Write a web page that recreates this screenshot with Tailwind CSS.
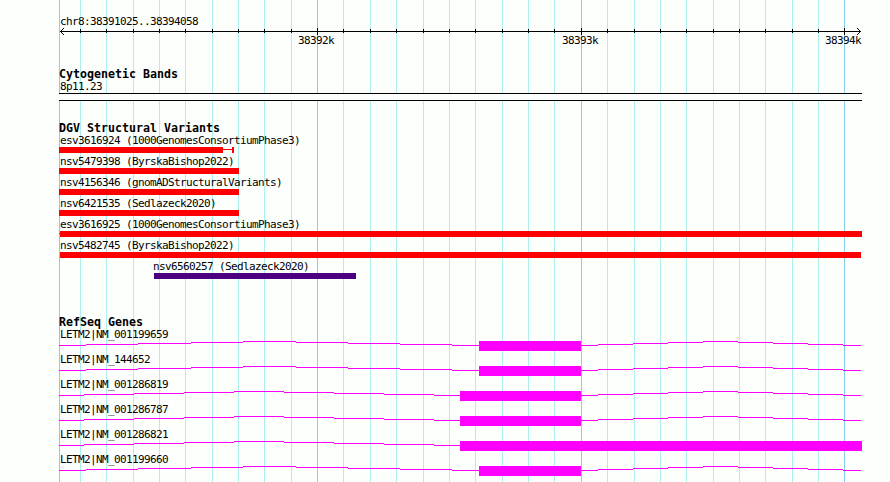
<!DOCTYPE html>
<html lang="en">
<head>
  <meta charset="UTF-8">
  <meta name="viewport" content="width=device-width, initial-scale=1.0">
  <title>chr8:38391025..38394058</title>
  <script src="https://cdn.jsdelivr.net/npm/@tailwindcss/browser@4"></script>
</head>
<body class="bg-[#fdfffc] text-black overflow-hidden">
  <div class="relative w-[890px] h-[482px] overflow-hidden font-['DejaVu_Sans_Mono',monospace] text-[11px] tracking-[-0.622px]">

    <!-- Grid lines -->
    <svg class="absolute inset-0" width="890" height="482" fill="none" shape-rendering="crispEdges">
      <path stroke="#afeeee" d="M80.5 0V482M106.5 0V482M133.5 0V482M159.5 0V482M185.5 0V482M212.5 0V482M238.5 0V482M264.5 0V482M291.5 0V482M343.5 0V482M370.5 0V482M396.5 0V482M423.5 0V482M449.5 0V482M475.5 0V482M502.5 0V482M528.5 0V482M554.5 0V482M607.5 0V482M634.5 0V482M660.5 0V482M686.5 0V482M713.5 0V482M739.5 0V482M765.5 0V482M792.5 0V482M818.5 0V482" />
      <path stroke="#87ceeb" d="M59.5 0V482M317.5 0V482M581.5 0V482M844.5 0V482" />
    </svg>

    <main class="relative flex flex-col pl-[59px]">
      <!-- Ruler -->
      <section class="h-[66px] pt-[13px]">
        <p class="h-[15px] leading-[17px] pl-px whitespace-pre">chr8:38391025..38394058</p>
        <svg class="block" width="831" height="22" viewBox="59 28 831 22">
          <g fill="none" stroke="#000" shape-rendering="crispEdges">
            <path d="M60 31.5H861" />
            <path d="M61 30.5h1M61 32.5h1M62 29.5h1M62 33.5h1M63 28.5h1M63 34.5h1" />
            <path d="M859 30.5h1M859 32.5h1M858 29.5h1M858 33.5h1M857 28.5h1M857 34.5h1" />
            <path d="M80.5 29v4M106.5 29v4M133.5 29v4M159.5 29v4M185.5 29v4M212.5 29v4M238.5 29v4M264.5 29v4M291.5 29v4M343.5 29v4M370.5 29v4M396.5 29v4M423.5 29v4M449.5 29v4M475.5 29v4M502.5 29v4M528.5 29v4M554.5 29v4M607.5 29v4M634.5 29v4M660.5 29v4M686.5 29v4M713.5 29v4M739.5 29v4M765.5 29v4M792.5 29v4M818.5 29v4" />
            <path d="M317.5 28v7M581.5 28v7M844.5 28v7" />
          </g>
          <text x="298" y="44">38392k</text>
          <text x="562" y="44">38393k</text>
          <text x="825" y="44">38394k</text>
        </svg>
      </section>

      <!-- Cytogenetic bands -->
      <section class="h-[54px]">
        <h2 class="h-3 leading-[17px] font-bold text-[11.63px] tracking-normal whitespace-pre">Cytogenetic Bands</h2>
        <p class="h-[15px] leading-[17px] pl-px">8p11.23</p>
        <div class="w-[803px] h-2 border-y border-black bg-[#fdfffc]"></div>
      </section>

      <!-- Structural variants -->
      <section class="h-[194px]">
        <h2 class="h-3 leading-[17px] font-bold text-[11.63px] tracking-normal whitespace-pre">DGV Structural Variants</h2>
        <p class="h-[15px] leading-[17px] pl-px whitespace-pre">esv3616924 (1000GenomesConsortiumPhase3)</p>
        <div class="flex h-1.5">
          <div class="w-[164px] bg-[#ff0000]"></div>
          <div class="w-[9px] h-px mt-0.5 bg-[#ff0000]"></div>
          <div class="w-0.5 bg-[#ff0000]"></div>
        </div>
        <p class="h-[15px] leading-[17px] pl-px whitespace-pre">nsv5479398 (ByrskaBishop2022)</p>
        <div class="w-[180px] h-1.5 bg-[#ff0000]"></div>
        <p class="h-[15px] leading-[17px] pl-px whitespace-pre">nsv4156346 (gnomADStructuralVariants)</p>
        <div class="w-[180px] h-1.5 bg-[#ff0000]"></div>
        <p class="h-[15px] leading-[17px] pl-px whitespace-pre">nsv6421535 (Sedlazeck2020)</p>
        <div class="w-[180px] h-1.5 bg-[#ff0000]"></div>
        <p class="h-[15px] leading-[17px] pl-px whitespace-pre">esv3616925 (1000GenomesConsortiumPhase3)</p>
        <div class="flex h-1.5">
          <div class="w-px h-px mt-0.5 bg-[#ff0000]"></div>
          <div class="w-[802px] bg-[#ff0000]"></div>
        </div>
        <p class="h-[15px] leading-[17px] pl-px whitespace-pre">nsv5482745 (ByrskaBishop2022)</p>
        <div class="w-[801px] h-1.5 ml-px bg-[#ff0000]"></div>
        <p class="h-[15px] leading-[17px] pl-[94px] whitespace-pre">nsv6560257 (Sedlazeck2020)</p>
        <div class="w-[202px] h-1.5 ml-[95px] bg-[#4b0082]"></div>
      </section>

      <!-- Genes: introns are stepped 1px lines, exons are filled boxes -->
      <section>
        <svg class="hidden">
          <defs>
            <path id="intron-a" d="M59 4.5H86M86 3.5H138M138 2.5H191M191 1.5H243M243 .5H296M296 1.5H348M348 2.5H400M400 3.5H452M452 4.5H479" />
            <path id="intron-b" d="M59 4.5H84M84 3.5H134M134 2.5H184M184 1.5H234M234 .5H284M284 1.5H334M334 2.5H384M384 3.5H434M434 4.5H460" />
            <path id="intron-c" d="M581 4.5H598M598 3.5H633M633 2.5H668M668 1.5H703M703 .5H738M738 1.5H773M773 2.5H808M808 3.5H843M843 4.5H861" />
          </defs>
        </svg>
        <h2 class="h-3 leading-[17px] font-bold text-[11.63px] tracking-normal whitespace-pre">RefSeq Genes</h2>
        <p class="h-[15px] leading-[17px] pl-px">LETM2|NM_001199659</p>
        <svg class="block" width="831" height="10" viewBox="59 0 831 10" stroke="#ff00ff" shape-rendering="crispEdges">
          <use href="#intron-a" /><use href="#intron-c" /><rect x="479" width="102" height="10" fill="#ff00ff" stroke="none" />
        </svg>
        <p class="h-[15px] leading-[17px] pl-px">LETM2|NM_144652</p>
        <svg class="block" width="831" height="10" viewBox="59 0 831 10" stroke="#ff00ff" shape-rendering="crispEdges">
          <use href="#intron-a" /><use href="#intron-c" /><rect x="479" width="102" height="10" fill="#ff00ff" stroke="none" />
        </svg>
        <p class="h-[15px] leading-[17px] pl-px">LETM2|NM_001286819</p>
        <svg class="block" width="831" height="10" viewBox="59 0 831 10" stroke="#ff00ff" shape-rendering="crispEdges">
          <use href="#intron-b" /><use href="#intron-c" /><rect x="460" width="121" height="10" fill="#ff00ff" stroke="none" />
        </svg>
        <p class="h-[15px] leading-[17px] pl-px">LETM2|NM_001286787</p>
        <svg class="block" width="831" height="10" viewBox="59 0 831 10" stroke="#ff00ff" shape-rendering="crispEdges">
          <use href="#intron-b" /><use href="#intron-c" /><rect x="460" width="121" height="10" fill="#ff00ff" stroke="none" />
        </svg>
        <p class="h-[15px] leading-[17px] pl-px">LETM2|NM_001286821</p>
        <svg class="block" width="831" height="10" viewBox="59 0 831 10" stroke="#ff00ff" shape-rendering="crispEdges">
          <use href="#intron-b" /><rect x="460" width="402" height="10" fill="#ff00ff" stroke="none" />
        </svg>
        <p class="h-[15px] leading-[17px] pl-px">LETM2|NM_001199660</p>
        <svg class="block" width="831" height="10" viewBox="59 0 831 10" stroke="#ff00ff" shape-rendering="crispEdges">
          <use href="#intron-a" /><use href="#intron-c" /><rect x="479" width="102" height="10" fill="#ff00ff" stroke="none" />
        </svg>
      </section>
    </main>
  </div>
</body>
</html>
